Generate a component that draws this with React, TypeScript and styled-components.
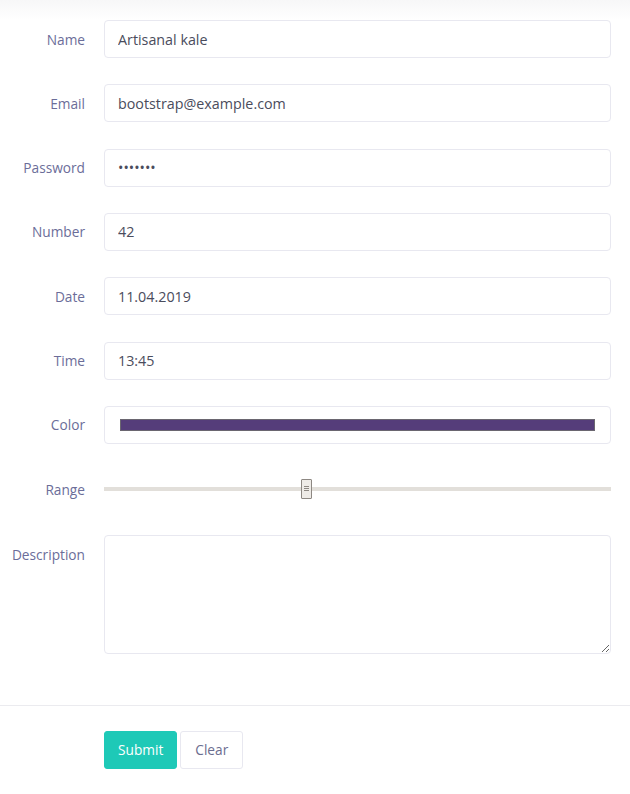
import React from "react";
import styled, { createGlobalStyle } from "styled-components";

const GlobalStyle = createGlobalStyle`
  html, body {
    margin: 0;
    padding: 0;
    background: #ffffff;
  }
  body {
    font-family: "Open Sans", "Liberation Sans", sans-serif;
  }
`;

function App() {
  return (
    <>
      <GlobalStyle />
      <Page>
        <TopShade />
        <Form onSubmit={(e) => e.preventDefault()}>
          <Fields>
            <Label htmlFor="name">Name</Label>
            <Input id="name" type="text" defaultValue="Artisanal kale" />

            <Label htmlFor="email">Email</Label>
            <Input id="email" type="email" defaultValue="bootstrap@example.com" />

            <Label htmlFor="password">Password</Label>
            <Input id="password" type="password" defaultValue="1234567" />

            <Label htmlFor="number">Number</Label>
            <Input id="number" type="text" defaultValue="42" />

            <Label htmlFor="date">Date</Label>
            <Input id="date" type="text" defaultValue="11.04.2019" />

            <Label htmlFor="time">Time</Label>
            <Input id="time" type="text" defaultValue="13:45" />

            <Label>Color</Label>
            <ColorBox>
              <Swatch color="#553d7a" />
            </ColorBox>

            <Label htmlFor="range">Range</Label>
            <Range id="range" type="range" min={0} max={1000} defaultValue={397} />

            <Label htmlFor="description" $top>
              Description
            </Label>
            <TextArea id="description" />
          </Fields>

          <Divider />

          <Actions>
            <Button type="submit" $primary>
              Submit
            </Button>
            <Button type="reset">Clear</Button>
          </Actions>
        </Form>
      </Page>
    </>
  );
}

export default App;

const Page = styled.div`
  width: 630px;
  min-height: 794px;
  background: #ffffff;
`;

const TopShade = styled.div`
  height: 20px;
  background: linear-gradient(#f7f7f8, #ffffff);
`;

const Form = styled.form`
  display: flex;
  flex-direction: column;
`;

const Fields = styled.div`
  display: grid;
  grid-template-columns: 85px 1fr;
  column-gap: 19px;
  row-gap: 26.33px;
  padding-right: 19px;
  align-items: center;
`;

const Label = styled.label<{ $top?: boolean }>`
  justify-self: end;
  align-self: ${(p) => (p.$top ? "start" : "center")};
  padding-top: ${(p) => (p.$top ? "10px" : "0")};
  color: #6b6d99;
  font-size: 13.7px;
  line-height: 19px;
  white-space: nowrap;
`;

const Input = styled.input`
  box-sizing: border-box;
  width: 100%;
  height: 38px;
  padding: 0 13px;
  border: 1px solid #e8e8f0;
  border-radius: 4px;
  background: #ffffff;
  color: #4a4c5c;
  font-family: "Open Sans", "Liberation Sans", sans-serif;
  font-size: 14.3px;
  outline: none;
`;

const ColorBox = styled.div`
  box-sizing: border-box;
  height: 38px;
  padding: 1px 15px 0;
  border: 1px solid #e8e8f0;
  border-radius: 4px;
  display: flex;
  align-items: center;
`;

const Swatch = styled.div<{ color: string }>`
  flex: 1;
  height: 10px;
  background: ${(p) => p.color};
  border: 1px solid #6a6670;
`;

const Range = styled.input`
  -webkit-appearance: none;
  appearance: none;
  width: 100%;
  height: 38px;
  margin: 0;
  background: transparent;
  outline: none;

  &::-webkit-slider-runnable-track {
    height: 4px;
    background: #e2dfda;
    border: none;
  }

  &::-webkit-slider-thumb {
    -webkit-appearance: none;
    appearance: none;
    box-sizing: border-box;
    width: 11px;
    height: 20px;
    margin-top: -8px;
    border: 1px solid #8d8883;
    border-radius: 1px;
    background-color: #eeebe7;
    background-image: linear-gradient(#8d8883, #8d8883),
      linear-gradient(#8d8883, #8d8883), linear-gradient(#8d8883, #8d8883);
    background-size: 5px 1px;
    background-repeat: no-repeat;
    background-position: 2px 6px, 2px 8px, 2px 10px;
  }
`;

const TextArea = styled.textarea`
  box-sizing: border-box;
  width: 100%;
  height: 119px;
  padding: 8px 13px;
  border: 1px solid #e8e8f0;
  border-radius: 4px;
  color: #4a4c5c;
  font-family: "Open Sans", "Liberation Sans", sans-serif;
  font-size: 14.3px;
  outline: none;
`;

const Divider = styled.div`
  height: 1px;
  margin-top: 51px;
  background: #ebebef;
`;

const Actions = styled.div`
  display: flex;
  gap: 3px;
  padding: 25px 0 0 104px;
`;

const Button = styled.button<{ $primary?: boolean }>`
  box-sizing: border-box;
  height: 38px;
  padding: 0 ${(p) => (p.$primary ? "13px" : "14px")};
  border: 1px solid ${(p) => (p.$primary ? "#1ec9b7" : "#e8e8f0")};
  border-radius: 3px;
  background: ${(p) => (p.$primary ? "#1ec9b7" : "#ffffff")};
  color: ${(p) => (p.$primary ? "#ffffff" : "#6b6d8f")};
  font-family: "Open Sans", "Liberation Sans", sans-serif;
  font-size: 13.7px;
  cursor: pointer;
`;
